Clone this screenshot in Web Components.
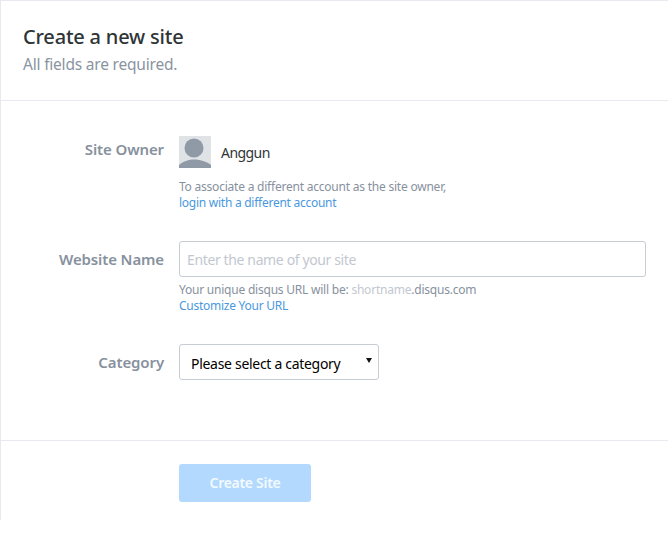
<!DOCTYPE html>
<html>
<head>
<meta charset="utf-8">
<title>Create a new site</title>
<style>
  html, body { margin: 0; background: #fff; }
  body { font-family: "Noto Sans", sans-serif; }
</style>
</head>
<body>
<site-form></site-form>

<template id="tpl-form">
  <style>
    :host { display: block; height: 520px; box-sizing: border-box; border-left: 1px solid #e7e9ee; border-top: 1px solid #e7e9ee; overflow: hidden; }
    header { height: 100px; box-sizing: border-box; padding: 23px 22px 0; border-bottom: 1px solid #e7e9ee; }
    h1 { margin: 0; font: 500 20px/26px "Noto Sans", sans-serif; letter-spacing: -0.2px; color: #2f3436; }
    .sub { margin: 4px 0 0; font: 15.5px/21px "Noto Sans", sans-serif; letter-spacing: -0.2px; color: #8a94a1; }
    .rows { height: 340px; box-sizing: border-box; padding-top: 35px; border-bottom: 1px solid #e7e9ee; }
    footer { padding: 23px 0 0 178px; }
  </style>
  <header>
    <h1>Create a new site</h1>
    <p class="sub">All fields are required.</p>
  </header>
  <div class="rows">
    <form-row label="Site Owner" top="3" gap="0">
      <owner-badge name="Anggun"></owner-badge>
      <help-text style="margin-top:11px">To associate a different account as the site owner,<br><a>login with a different account</a></help-text>
    </form-row>
    <form-row label="Website Name" top="8" gap="30">
      <text-field placeholder="Enter the name of your site"></text-field>
      <help-text style="margin-top:5px">Your unique disqus URL will be: <b>shortname</b>.disqus.com<br><a>Customize Your URL</a></help-text>
    </form-row>
    <form-row label="Category" top="8" gap="30">
      <category-select>Please select a category</category-select>
    </form-row>
  </div>
  <footer><submit-button>Create Site</submit-button></footer>
</template>

<template id="tpl-row">
  <style>
    :host { display: grid; grid-template-columns: 163px 467px; column-gap: 15px; }
    label { text-align: right; font: 600 15px/20px "Noto Sans", sans-serif; letter-spacing: -0.12px; color: #87919e; }
  </style>
  <label></label>
  <div><slot></slot></div>
</template>

<template id="tpl-owner">
  <style>
    :host { display: flex; align-items: center; gap: 10px; height: 32px; }
    svg { display: block; }
    span { font: 14px/18px "Noto Sans", sans-serif; letter-spacing: -0.55px; color: #2f3436; margin-top: 1px; }
  </style>
  <svg width="32" height="32" viewBox="0 0 32 32">
    <rect width="32" height="32" fill="#dfe3e6"/>
    <circle cx="15" cy="12" r="9.500" fill="#8f9aa6"/>
    <path d="M0 32v-3c3-3 8.500-5.500 15-5.500S29 26 32 29v3z" fill="#8f9aa6"/>
  </svg>
  <span></span>
</template>

<template id="tpl-help">
  <style>
    :host { display: block; font: 12px/16px "Noto Sans", sans-serif; letter-spacing: -0.22px; color: #87919e; }
    ::slotted(a) { color: #4a98e0; letter-spacing: -0.26px; }
    ::slotted(b) { font-weight: 400; color: #c2c8d0; }
  </style>
  <slot></slot>
</template>

<template id="tpl-field">
  <style>
    :host { display: block; }
    input { display: block; width: 100%; height: 36px; box-sizing: border-box; padding: 0 7px; border: 1px solid #c7ccd3; border-radius: 3px; background: #fff; outline: 0; font: 14px "Noto Sans", sans-serif; letter-spacing: -0.37px; }
    input::placeholder { color: #c2c8d0; opacity: 1; }
  </style>
  <input type="text">
</template>

<template id="tpl-select">
  <style>
    :host { display: flex; align-items: center; justify-content: space-between; width: 200px; height: 36px; box-sizing: border-box; padding: 0 6px 0 11px; border: 1px solid #c7ccd3; border-radius: 3px; font: 14px/18px "Noto Sans", sans-serif; letter-spacing: -0.3px; color: #000; }
    svg { display: block; margin-top: -4px; }
    .t { margin-top: 3px; }
  </style>
  <span class="t"><slot></slot></span>
  <svg width="6" height="5" viewBox="0 0 6 5"><path d="M0 0h6L3 5z" fill="#111"/></svg>
</template>

<template id="tpl-button">
  <style>
    :host { display: block; width: 132px; height: 38px; box-sizing: border-box; border-radius: 3px; background: #b3dafe; color: #f2f9ff; text-align: center; font: 600 14px/38px "Noto Sans", sans-serif; letter-spacing: -0.3px; }
  </style>
  <slot></slot>
</template>

<script>
  // each element clones its template into an open shadow root
  function fromTemplate(el, id) {
    const root = el.attachShadow({ mode: 'open' });
    root.appendChild(document.getElementById(id).content.cloneNode(true));
    return root;
  }

  class SiteForm extends HTMLElement {
    constructor() { super(); fromTemplate(this, 'tpl-form'); }
  }
  class FormRow extends HTMLElement {
    constructor() { super(); fromTemplate(this, 'tpl-row'); }
    connectedCallback() {
      const label = this.shadowRoot.querySelector('label');
      label.textContent = this.getAttribute('label');
      label.style.paddingTop = this.getAttribute('top') + 'px';
      this.style.marginTop = this.getAttribute('gap') + 'px';
    }
  }
  class OwnerBadge extends HTMLElement {
    constructor() { super(); fromTemplate(this, 'tpl-owner'); }
    connectedCallback() {
      this.shadowRoot.querySelector('span').textContent = this.getAttribute('name');
    }
  }
  class HelpText extends HTMLElement {
    constructor() { super(); fromTemplate(this, 'tpl-help'); }
  }
  class TextField extends HTMLElement {
    constructor() { super(); fromTemplate(this, 'tpl-field'); }
    connectedCallback() {
      this.shadowRoot.querySelector('input').placeholder = this.getAttribute('placeholder');
    }
  }
  class CategorySelect extends HTMLElement {
    constructor() { super(); fromTemplate(this, 'tpl-select'); }
  }
  class SubmitButton extends HTMLElement {
    constructor() { super(); fromTemplate(this, 'tpl-button'); }
  }

  customElements.define('form-row', FormRow);
  customElements.define('owner-badge', OwnerBadge);
  customElements.define('help-text', HelpText);
  customElements.define('text-field', TextField);
  customElements.define('category-select', CategorySelect);
  customElements.define('submit-button', SubmitButton);
  customElements.define('site-form', SiteForm);
</script>
</body>
</html>
